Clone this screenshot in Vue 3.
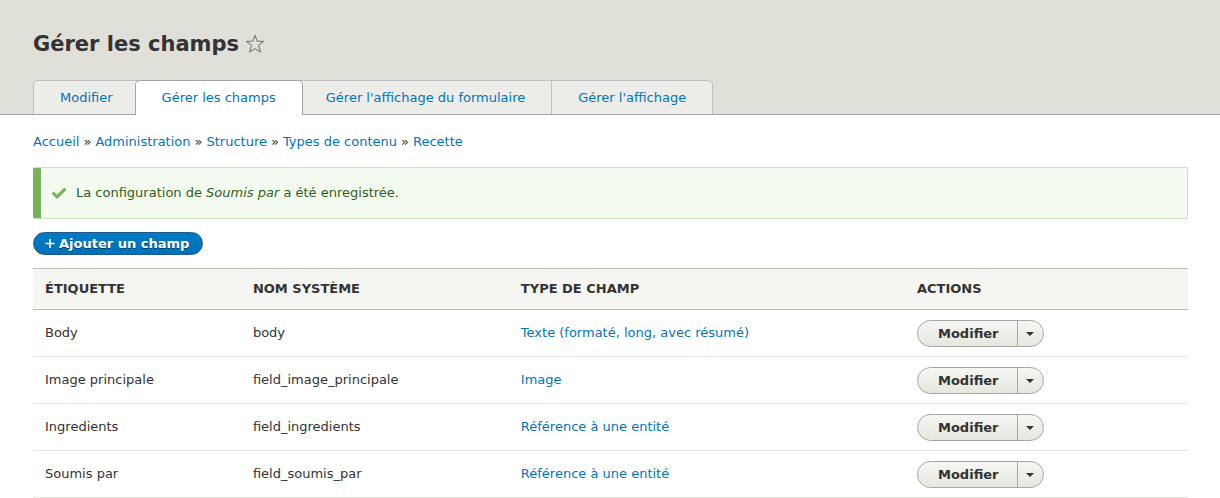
<script setup>
const tabs = [
  { label: 'Modifier' },
  { label: 'Gérer les champs', active: true },
  { label: "Gérer l'affichage du formulaire" },
  { label: "Gérer l'affichage" },
]

const crumbs = ['Accueil', 'Administration', 'Structure', 'Types de contenu', 'Recette']

const fields = [
  { label: 'Body', name: 'body', type: 'Texte (formaté, long, avec résumé)' },
  { label: 'Image principale', name: 'field_image_principale', type: 'Image' },
  { label: 'Ingredients', name: 'field_ingredients', type: 'Référence à une entité' },
  { label: 'Soumis par', name: 'field_soumis_par', type: 'Référence à une entité' },
]
</script>

<template>
  <div class="page">
    <header class="header">
      <div class="title-row">
        <h1>Gérer les champs</h1>
        <button class="star" type="button" aria-label="Ajouter aux raccourcis">
          <svg width="20" height="20" viewBox="0 0 20 20">
            <path
              d="M10 1.3 L12.1 7.1 L18.5 7.4 L13.6 11.4 L15.5 18 L10 14.6 L4.5 18 L6.4 11.4 L1.5 7.4 L7.9 7.1 Z"
              fill="none" stroke="#7d8065" stroke-width="1.1" stroke-linejoin="round"
            />
          </svg>
        </button>
      </div>
      <nav aria-label="Onglets principaux">
        <ul class="tabs">
          <li v-for="tab in tabs" :key="tab.label" :class="['tab', { active: tab.active }]">
            <a href="#">{{ tab.label }}</a>
          </li>
        </ul>
      </nav>
    </header>

    <main class="content">
      <nav aria-label="Fil d'Ariane">
        <ol class="breadcrumb">
          <li v-for="crumb in crumbs" :key="crumb"><a href="#">{{ crumb }}</a></li>
        </ol>
      </nav>

      <div class="message" role="status">
        <svg width="16" height="16" viewBox="0 0 16 16" aria-hidden="true">
          <path d="M1.6 7.6 L6.1 11.8 L14.4 3.6" fill="none" stroke="#73b355" stroke-width="3" />
        </svg>
        <p>La configuration de <em>Soumis par</em> a été enregistrée.</p>
      </div>

      <button class="add" type="button">
        <svg width="10" height="10" viewBox="0 0 10 10" aria-hidden="true">
          <path d="M0.5 4.5 H9.5 M5 0 V9" stroke="#fff" stroke-width="1.6" />
        </svg>
        Ajouter un champ
      </button>

      <table>
        <thead>
          <tr>
            <th class="col-label" scope="col">Étiquette</th>
            <th class="col-name" scope="col">Nom système</th>
            <th class="col-type" scope="col">Type de champ</th>
            <th scope="col">Actions</th>
          </tr>
        </thead>
        <tbody>
          <tr v-for="field in fields" :key="field.name">
            <td>{{ field.label }}</td>
            <td>{{ field.name }}</td>
            <td><a href="#">{{ field.type }}</a></td>
            <td>
              <div class="dropbutton">
                <button class="edit" type="button">Modifier</button>
                <button class="toggle" type="button" aria-label="Afficher les actions">
                  <span class="caret"></span>
                </button>
              </div>
            </td>
          </tr>
        </tbody>
      </table>
    </main>
  </div>
</template>

<style>
body {
  margin: 0;
  background: #fff;
}
</style>

<style scoped>
.page {
  color: #333;
  font-family: "DejaVu Sans", sans-serif;
  font-size: 13px;
  line-height: 20px;
}

a {
  color: #0074bd;
  text-decoration: none;
}

a:hover {
  text-decoration: underline;
}

button {
  font-family: inherit;
  font-size: 13px;
  font-weight: bold;
  cursor: pointer;
}

.header {
  padding: 29px 33px 0;
  background: #e0e0d8;
  border-bottom: 1px solid #a6a6a6;
}

.title-row {
  display: flex;
  align-items: center;
  gap: 6px;
  height: 30px;
  margin-bottom: 21px;
}

h1 {
  margin: 0;
  font-size: 21px;
  line-height: 30px;
}

.star {
  display: flex;
  padding: 0;
  border: 0;
  background: none;
}

.tabs {
  display: flex;
  margin: 0;
  padding: 0;
  list-style: none;
}

.tab {
  box-sizing: border-box;
  height: 34px;
  padding: 7px 26px 0;
  border: 1px solid #bfbfbf;
  border-bottom: 0;
  background: #ecede8;
}

.tab + .tab {
  margin-left: -1px;
}

.tab:first-child {
  border-top-left-radius: 5px;
}

.tab:last-child {
  border-top-right-radius: 5px;
}

.tab.active {
  z-index: 1;
  height: 35px;
  margin: 0 -3px -1px -5px;
  border-color: #a6a6a6;
  border-radius: 5px 5px 0 0;
  background: #fff;
}

.content {
  padding: 17px 32px 0 33px;
}

.breadcrumb {
  display: flex;
  margin: 0 0 15px;
  padding: 0;
  list-style: none;
}

.breadcrumb li + li::before {
  content: "»";
  margin: 0 4px;
}

.message {
  display: flex;
  align-items: center;
  gap: 9px;
  padding: 15px 10px;
  border: 1px solid #c9e1bd;
  border-left: 0;
  border-radius: 2px;
  background: linear-gradient(#77b259, #77b259) left / 8px 100% no-repeat border-box #f3faef;
  padding-left: 18px;
  color: #325e1c;
}

.message p {
  margin: 0;
}

.add {
  display: flex;
  align-items: center;
  gap: 4px;
  margin: 13px 0;
  padding: 0 13px 0 11px;
  border: 1px solid #1e5c90;
  border-radius: 12px;
  background: linear-gradient(#007bc6, #0071b8);
  color: #fff;
  line-height: 21px;
  text-shadow: 0 1px rgba(0, 0, 0, 0.5);
}

table {
  width: 100%;
  border-collapse: separate;
  border-spacing: 0;
  table-layout: fixed;
}

th {
  padding: 10px 12px;
  border: solid #bfbfba;
  border-width: 1px 0;
  background: #f5f5f2;
  text-align: left;
  text-transform: uppercase;
}

.col-label {
  width: 18%;
}

.col-name {
  width: 23.2%;
}

.col-type {
  width: 34.3%;
}

th,
td {
  box-sizing: border-box;
}

td {
  height: 47px;
  padding: 0 12px;
  border-bottom: 1px solid #e6e4df;
}

.dropbutton {
  display: flex;
  width: fit-content;
  margin-top: 1px;
  overflow: hidden;
  border: 1px solid #a6a6a6;
  border-radius: 14px;
  background: linear-gradient(#f6f6f3, #e7e7df);
}

.dropbutton button {
  border: 0;
  background: none;
  color: #333;
  line-height: 25px;
}

.edit {
  padding: 0 18px 0 20px;
}

.dropbutton .toggle {
  display: flex;
  align-items: center;
  justify-content: center;
  width: 26px;
  padding: 0;
  border-left: 1px solid #a6a6a6;
}

.caret {
  border: solid transparent;
  border-width: 4px 4px 0;
  border-top-color: #333;
}
</style>
